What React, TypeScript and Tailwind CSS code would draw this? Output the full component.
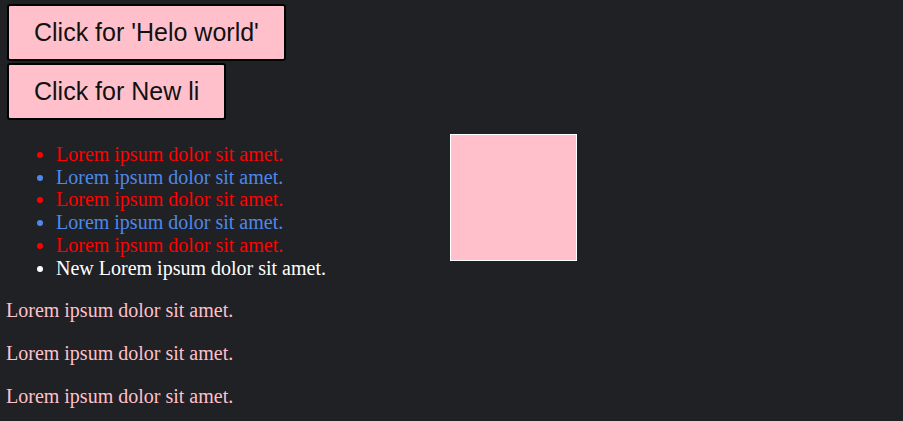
const ITEMS = [
  { text: "Lorem ipsum dolor sit amet.", color: "text-[#ff0000] marker:text-[#ff0000]" },
  { text: "Lorem ipsum dolor sit amet.", color: "text-[#4d88ea] marker:text-[#4d88ea]" },
  { text: "Lorem ipsum dolor sit amet.", color: "text-[#ff0000] marker:text-[#ff0000]" },
  { text: "Lorem ipsum dolor sit amet.", color: "text-[#4d88ea] marker:text-[#4d88ea]" },
  { text: "Lorem ipsum dolor sit amet.", color: "text-[#ff0000] marker:text-[#ff0000]" },
  { text: "New Lorem ipsum dolor sit amet.", color: "text-white marker:text-white" },
];

export default function App() {
  return (
    <div
      className="min-h-[421px] w-full bg-[#202124] overflow-hidden"
      style={{ fontFamily: "'Liberation Serif', 'Times New Roman', serif" }}
    >
      <div className="flex flex-col items-start gap-[2px] pt-[4px] pl-[7px]">
        <button className="bg-[#ffc0cb] border-2 border-black rounded-[3px] px-[25px] py-[13px] text-[25px] leading-[27px] text-[#111111] font-['Liberation_Sans',Arial,sans-serif]">
          Click for 'Helo world'
        </button>
        <button className="bg-[#ffc0cb] border-2 border-black rounded-[3px] px-[25px] py-[13px] text-[25px] leading-[27px] text-[#111111] font-['Liberation_Sans',Arial,sans-serif]">
          Click for New li
        </button>
      </div>

      <div className="flex items-start">
        <ul className="list-disc pl-[56px] mt-[23px] w-[450px] text-[20px] leading-[22.7px]">
          {ITEMS.map((item, i) => (
            <li key={i} className={item.color}>
              {item.text}
            </li>
          ))}
        </ul>
        <div className="mt-[14px] w-[127px] h-[127px] bg-[#ffc0cb] border border-white" />
      </div>

      <div className="pl-[6px] text-[20px] leading-[23px] text-[#ffc0cb]">
        <p className="mt-[20px]">Lorem ipsum dolor sit amet.</p>
        <p className="mt-[20px]">Lorem ipsum dolor sit amet.</p>
        <p className="mt-[20px]">Lorem ipsum dolor sit amet.</p>
      </div>
    </div>
  );
}
